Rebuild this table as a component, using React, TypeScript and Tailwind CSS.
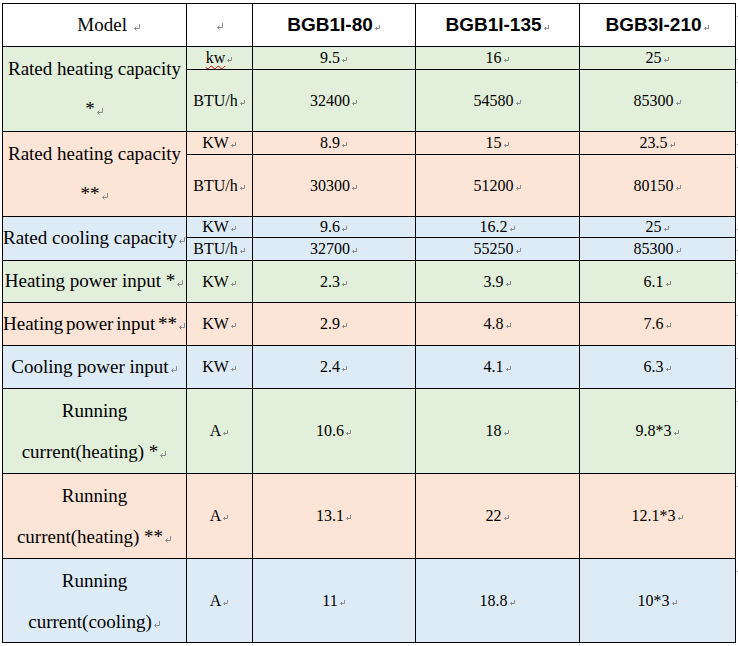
import React from "react";

const G = "bg-[#e2efda]";
const P = "bg-[#fce4d6]";
const B = "bg-[#ddebf7]";

function Mark({ big }: { big?: boolean }) {
  if (big) {
    return (
      <svg width="8" height="7" viewBox="0 0 8 7" className="inline-block ml-[1px] shrink-0" fill="none" stroke="#8c8c8c" strokeWidth="1">
        <path d="M6.5 0V4.5H1.5" />
        <path d="M3.5 2.5L1.5 4.5L3.5 6.5" />
      </svg>
    );
  }
  return (
    <svg width="7" height="6" viewBox="0 0 7 6" className="inline-block ml-[1px] shrink-0" fill="none" stroke="#8c8c8c" strokeWidth="1">
      <path d="M5.5 0V3.5H1.5" />
      <path d="M3 2L1.5 3.5L3 5" />
    </svg>
  );
}

const serif = "font-['Liberation_Serif','Times_New_Roman',serif]";
const sans = "font-['Liberation_Sans',Arial,sans-serif]";

function V({ bg, children, span }: { bg: string; children: React.ReactNode; span?: boolean }) {
  return (
    <div className={`${bg} ${span ? "row-span-2" : ""} flex items-center justify-center overflow-hidden whitespace-nowrap text-[16px] text-black ${serif}`}>
      <span className="inline-flex items-baseline">{children}</span>
    </div>
  );
}

function Label1({ bg, text, extra }: { bg: string; text: string; extra?: string }) {
  return (
    <div className={`${bg} flex items-center justify-center overflow-hidden whitespace-nowrap text-[19px] text-black ${serif} ${extra ?? ""}`}>
      <span className="inline-flex items-baseline">
        {text}
        <Mark big />
      </span>
    </div>
  );
}

function Label2({ bg, l1, l2, lh, span }: { bg: string; l1: string; l2: string; lh: string; span?: boolean }) {
  return (
    <div className={`${bg} ${span ? "row-span-2" : ""} flex flex-col items-center justify-center overflow-hidden whitespace-nowrap text-[19px] text-black ${serif} ${lh}`}>
      <span>{l1}</span>
      <span className="inline-flex items-baseline">
        {l2}
        <Mark big />
      </span>
    </div>
  );
}

function Row4({ bg, vals }: { bg: string; vals: React.ReactNode[] }) {
  return (
    <>
      {vals.map((v, i) => (
        <V key={i} bg={bg}>
          {v}
          <Mark />
        </V>
      ))}
    </>
  );
}

const dotHeights = [43, 23, 62, 23, 62, 21, 23, 42, 43, 43, 85, 85, 84];

export default function App() {
  return (
    <div className="w-[738px] h-[646px] bg-white flex items-start">
      <div className="ml-[2px] mt-[3px] grid grid-cols-[183px_65px_162px_163px_155px] grid-rows-[42px_22px_61px_22px_61px_20px_22px_41px_42px_42px_84px_84px_83px] gap-[1px] p-[1px] bg-black">
        {/* header */}
        <div className={`bg-white flex items-center justify-center pl-[29px] text-[19px] text-black ${serif}`}>
          <span className="inline-flex items-baseline">
            Model&nbsp;
            <Mark big />
          </span>
        </div>
        <div className="bg-white flex items-center justify-center pt-[2px]">
          <Mark big />
        </div>
        {["BGB1I-80", "BGB1I-135", "BGB3I-210"].map((m) => (
          <div key={m} className={`bg-white flex items-center justify-center text-[19px] font-bold text-black ${sans}`}>
            <span className="inline-flex items-baseline">
              {m}
              <Mark />
            </span>
          </div>
        ))}

        {/* Rated heating capacity * */}
        <Label2 bg={G} l1="Rated heating capacity" l2="*" lh="leading-[40px]" span />
        <V bg={G}>
          <span className="underline decoration-wavy decoration-[#e00000] decoration-1 underline-offset-[2px]">kw</span>
          <Mark />
        </V>
        <Row4 bg={G} vals={["9.5", "16", "25"]} />
        <Row4 bg={G} vals={["BTU/h", "32400", "54580", "85300"]} />

        {/* Rated heating capacity ** */}
        <Label2 bg={P} l1="Rated heating capacity" l2="**" lh="leading-[40px]" span />
        <Row4 bg={P} vals={["KW", "8.9", "15", "23.5"]} />
        <Row4 bg={P} vals={["BTU/h", "30300", "51200", "80150"]} />

        {/* Rated cooling capacity */}
        <div className={`${B} row-span-2 flex items-center justify-center overflow-hidden whitespace-nowrap text-[19px] text-black ${serif}`}>
          <span className="inline-flex items-baseline">
            Rated cooling capacity
            <Mark big />
          </span>
        </div>
        <Row4 bg={B} vals={["KW", "9.6", "16.2", "25"]} />
        <Row4 bg={B} vals={["BTU/h", "32700", "55250", "85300"]} />

        <Label1 bg={G} text="Heating power input *" />
        <Row4 bg={G} vals={["KW", "2.3", "3.9", "6.1"]} />

        <Label1 bg={P} text="Heating power input **" extra="[word-spacing:-2px]" />
        <Row4 bg={P} vals={["KW", "2.9", "4.8", "7.6"]} />

        <Label1 bg={B} text="Cooling power input" />
        <Row4 bg={B} vals={["KW", "2.4", "4.1", "6.3"]} />

        <Label2 bg={G} l1="Running" l2="current(heating) *" lh="leading-[41px]" />
        <Row4 bg={G} vals={["A", "10.6", "18", "9.8*3"]} />

        <Label2 bg={P} l1="Running" l2="current(heating) **" lh="leading-[41px]" />
        <Row4 bg={P} vals={["A", "13.1", "22", "12.1*3"]} />

        <Label2 bg={B} l1="Running" l2="current(cooling)" lh="leading-[41px]" />
        <Row4 bg={B} vals={["A", "11", "18.8", "10*3"]} />
      </div>
      <div className="mt-[3px] ml-[1px] flex flex-col">
        {dotHeights.map((h, i) => (
          <div key={i} style={{ height: h }} className="w-[2px]">
            <div className="mt-[13px] w-[1px] h-[1px] bg-[#7f7f7f]" />
          </div>
        ))}
      </div>
    </div>
  );
}
